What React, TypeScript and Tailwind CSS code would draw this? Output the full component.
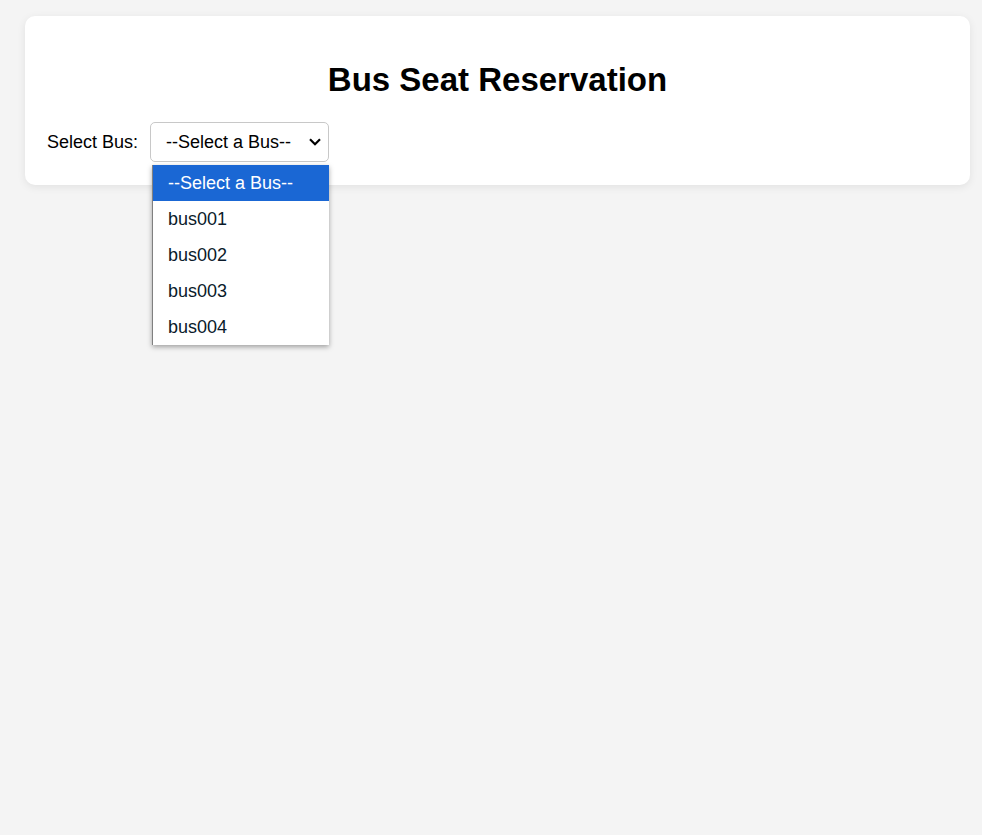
const buses = ['bus001', 'bus002', 'bus003', 'bus004']

export default function App() {
  return (
    <div className="min-h-[835px] bg-[#f4f4f4] pt-4 font-['Liberation_Sans',Arial,sans-serif] text-black">
      <div className="ml-[25px] w-[945px] rounded-[10px] bg-white px-[22px] pt-[45px] pb-[23px] shadow-[0_2px_8px_rgba(0,0,0,0.08)]">
        <h1 className="text-center text-[33px] leading-[37px] font-bold">Bus Seat Reservation</h1>

        <div className="mt-[24px] flex items-center gap-[12px]">
          <label className="text-[18px] leading-[20px]">Select Bus:</label>
          <div className="relative">
            <div className="flex h-[40px] w-[179px] items-center justify-between rounded-[5px] border border-[#c8c8c8] bg-white pr-[7px] pl-[15px] text-[18px]">
              <span>--Select a Bus--</span>
              <svg width="12" height="8" viewBox="0 0 12 8" fill="none" stroke="black" strokeWidth="2.2">
                <path d="M1 1.2 L6 6.2 L11 1.2" />
              </svg>
            </div>

            {/* open dropdown list */}
            <ul className="absolute top-[43px] left-[2px] z-10 w-[177px] border-l border-[#808080] bg-white shadow-[0_2px_5px_rgba(0,0,0,0.35)]">
              <li className="flex h-[36px] items-center bg-[#1a67d4] pl-[15px] text-[18px] text-white">--Select a Bus--</li>
              {buses.map(b => (
                <li key={b} className="flex h-[36px] items-center pl-[15px] text-[18px] text-[#0a1a2a]">{b}</li>
              ))}
            </ul>
          </div>
        </div>
      </div>
    </div>
  )
}
